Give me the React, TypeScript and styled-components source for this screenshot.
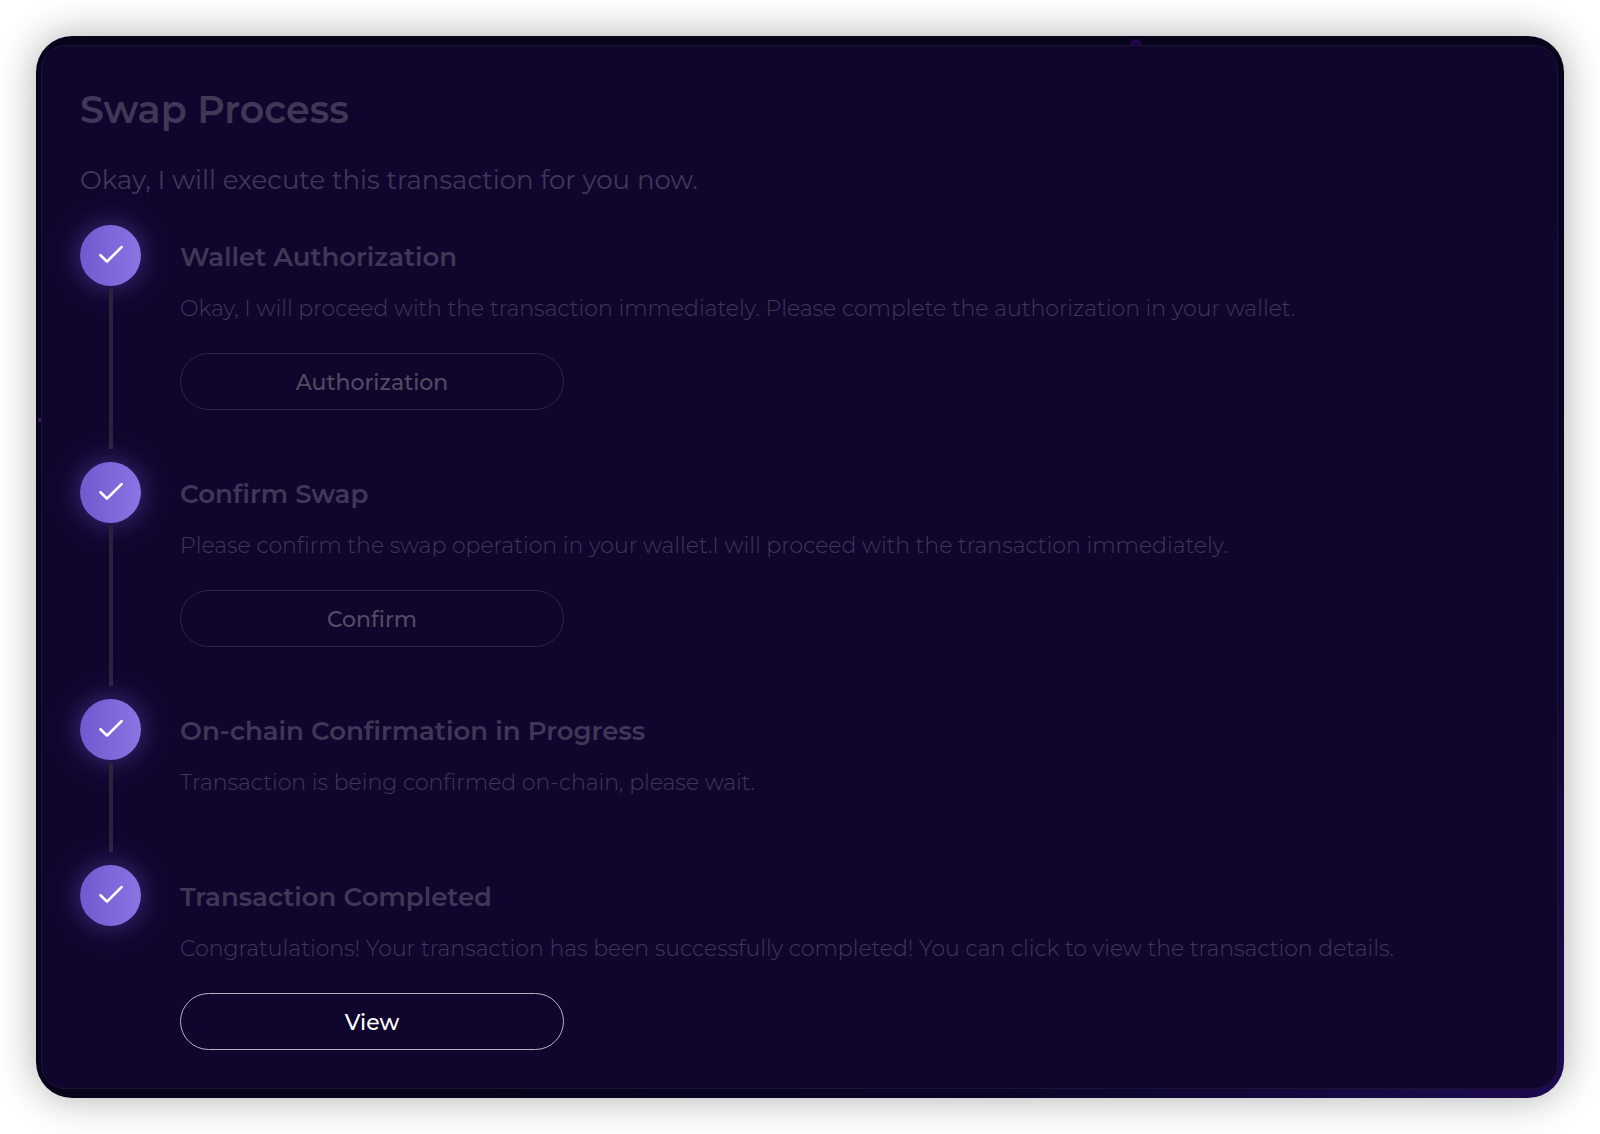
import React from "react";
import styled, { createGlobalStyle } from "styled-components";

const GlobalStyle = createGlobalStyle`
  *, *::before, *::after { box-sizing: border-box; }
  body {
    margin: 0;
    background: #ffffff;
    font-family: Montserrat, Inter, "Liberation Sans", sans-serif;
  }
`;

const Page = styled.main`
  padding: 36px;
`;

const Frame = styled.div`
  position: relative;
  overflow: hidden;
  padding: 9px 6px 9px 5px;
  border-radius: 36px;
  background: linear-gradient(135deg, #06031a 0%, #06031a 58%, #0a0428 78%, #1e0a50 100%);
`;

const Shadow = styled.div`
  border-radius: 36px;
  box-shadow: 0 0 40px rgba(0, 0, 0, 0.32);
`;

const Spark = styled.span<{ $size: number; $left: string; $top: string; $color: string }>`
  position: absolute;
  left: ${(p) => p.$left};
  top: ${(p) => p.$top};
  width: ${(p) => p.$size}px;
  height: ${(p) => p.$size}px;
  border-radius: 50%;
  background: ${(p) => p.$color};
`;

const Panel = styled.section`
  position: relative;
  padding: 38px;
  border: 1px solid #1c1435;
  border-radius: 24px;
  background: #10062d;
`;

const Title = styled.h1`
  margin: 0 0 26px;
  font-size: 38px;
  line-height: 52px;
  font-weight: 600;
  color: #403757;
`;

const Intro = styled.p`
  margin: 0 0 27px;
  font-size: 26px;
  line-height: 36px;
  font-weight: 400;
  color: #403757;
`;

const Steps = styled.ol`
  margin: 0;
  padding: 0;
  list-style: none;
`;

const Step = styled.li`
  display: grid;
  grid-template-columns: 61px 1fr;
  column-gap: 39px;
`;

const Rail = styled.div`
  display: flex;
  flex-direction: column;
  align-items: center;
  gap: 3px;
  padding-bottom: 13px;
`;

const Badge = styled.span`
  display: block;
  width: 61px;
  height: 61px;
  border-radius: 50%;
  background: linear-gradient(90deg, #7158cf, #8a75e4);
  box-shadow: 0 0 24px rgba(112, 90, 220, 0.4), 0 0 48px rgba(112, 90, 220, 0.18);

  svg { display: block; }
`;

const Connector = styled.span`
  flex: 1;
  width: 4px;
  background: #2b233d;
`;

const Body = styled.div<{ $space: number }>`
  padding: 14px 0 ${(p) => p.$space}px;
`;

const StepTitle = styled.h2`
  margin: 0 0 16px;
  font-size: 26px;
  line-height: 36px;
  font-weight: 600;
  color: #403757;
`;

const Description = styled.p`
  margin: 0;
  font-size: 22px;
  line-height: 36px;
  font-weight: 300;
  color: #403757;
`;

const Action = styled.button<{ $active?: boolean }>`
  display: block;
  width: 384px;
  max-width: 100%;
  height: 57px;
  margin-top: 26px;
  padding: 1px 0 0;
  border: 1px solid ${(p) => (p.$active ? "#b5b2bf" : "#2d253f")};
  border-radius: 29px;
  background: transparent;
  font-family: inherit;
  font-size: 22px;
  font-weight: 500;
  color: ${(p) => (p.$active ? "#ffffff" : "#524b62")};
  cursor: pointer;
`;

const CheckBadge = () => (
  <Badge>
    <svg width="61" height="61" viewBox="0 0 61 61" fill="none" aria-hidden="true">
      <path d="M20.5 30.3L27 36.6L41.6 22.1" stroke="#fff" strokeWidth="2.7" strokeLinecap="round" strokeLinejoin="round" />
    </svg>
  </Badge>
);

type StepData = { title: string; text: string; action?: string; active?: boolean };

const steps: StepData[] = [
  {
    title: "Wallet Authorization",
    text: "Okay, I will proceed with the transaction immediately. Please complete the authorization in your wallet.",
    action: "Authorization",
  },
  {
    title: "Confirm Swap",
    text: "Please confirm the swap operation in your wallet.I will proceed with the transaction immediately.",
    action: "Confirm",
  },
  {
    title: "On-chain Confirmation in Progress",
    text: "Transaction is being confirmed on-chain, please wait.",
  },
  {
    title: "Transaction Completed",
    text: "Congratulations! Your transaction has been successfully completed! You can click to view the transaction details.",
    action: "View",
    active: true,
  },
];

export default function App() {
  return (
    <>
      <GlobalStyle />
      <Page>
        <Shadow>
          <Frame>
            <Spark $size={12} $left="1094px" $top="3px" $color="#22044a" />
            <Spark $size={4} $left="2px" $top="382px" $color="#3a1a5c" />
            <Panel>
              <Title>Swap Process</Title>
              <Intro>Okay, I will execute this transaction for you now.</Intro>
              <Steps>
                {steps.map((step, i) => {
                  const last = i === steps.length - 1;
                  return (
                    <Step key={step.title}>
                      <Rail>
                        <CheckBadge />
                        {!last && <Connector />}
                      </Rail>
                      <Body $space={last ? 0 : step.action ? 52 : 64}>
                        <StepTitle>{step.title}</StepTitle>
                        <Description>{step.text}</Description>
                        {step.action && (
                          <Action type="button" $active={step.active}>
                            {step.action}
                          </Action>
                        )}
                      </Body>
                    </Step>
                  );
                })}
              </Steps>
            </Panel>
          </Frame>
        </Shadow>
      </Page>
    </>
  );
}
